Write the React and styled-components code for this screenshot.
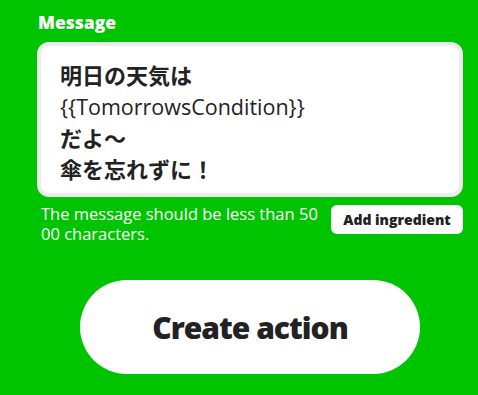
import React from 'react'
import styled, { createGlobalStyle } from 'styled-components'

const GlobalStyle = createGlobalStyle`
  html, body {
    margin: 0;
    padding: 0;
    background: #00c400;
  }
`

const Page = styled.div`
  box-sizing: border-box;
  min-height: 100vh;
  width: 478px;
  padding: 10px 15px 0 37px;
  background: #00c400;
  font-family: "Open Sans", "Noto Sans", "Noto Sans CJK JP", sans-serif;
`

const Label = styled.div`
  color: #fff;
  font-size: 17.5px;
  font-weight: 800;
  line-height: 24px;
  margin-bottom: 8px;
  padding-left: 1px;
`

const MessageBox = styled.div`
  box-sizing: border-box;
  width: 426px;
  height: 155px;
  background: #fff;
  border: 4px solid #ececec;
  border-radius: 12px;
  padding: 13px 19px;
  color: #222;
  font-size: 22px;
  line-height: 30.5px;
`

const Line = styled.div`
  font-family: "Noto Sans CJK JP", sans-serif;
  font-weight: ${({ $bold }) => ($bold ? 700 : 400)};
  white-space: nowrap;
`

const Ingredient = styled.span`
  font-family: "Open Sans", sans-serif;
  font-size: 21.5px;
  font-weight: 400;
`

const Footer = styled.div`
  display: flex;
  justify-content: space-between;
  align-items: flex-start;
  margin-top: 7px;
  width: 426px;
`

const Hint = styled.div`
  width: 280px;
  padding-left: 4px;
  color: #fff;
  font-size: 16.5px;
  line-height: 20px;
  word-break: break-all;
`

const SmallButton = styled.button`
  box-sizing: border-box;
  width: 132px;
  height: 29px;
  margin-top: 1px;
  padding: 0;
  border: none;
  border-radius: 6px;
  background: #fff;
  color: #222;
  font-family: "Open Sans", sans-serif;
  font-size: 14px;
  font-weight: 800;
`

const BigButton = styled.button`
  display: block;
  box-sizing: border-box;
  width: 340px;
  height: 94px;
  margin: 36px 0 0 43px;
  border: none;
  border-radius: 47px;
  background: #fff;
  color: #222;
  font-family: "Open Sans", sans-serif;
  font-size: 30px;
  font-weight: 800;
  letter-spacing: -1px;
`

const App = () => {
  return (
    <Page>
      <GlobalStyle />
      <Label>Message</Label>
      <MessageBox>
        <Line $bold>明日の天気は</Line>
        <Line><Ingredient>{'{{TomorrowsCondition}}'}</Ingredient></Line>
        <Line $bold>だよ〜</Line>
        <Line $bold>傘を忘れずに！</Line>
      </MessageBox>
      <Footer>
        <Hint>The message should be less than 5000 characters.</Hint>
        <SmallButton>Add ingredient</SmallButton>
      </Footer>
      <BigButton>Create action</BigButton>
    </Page>
  )
}

export default App
